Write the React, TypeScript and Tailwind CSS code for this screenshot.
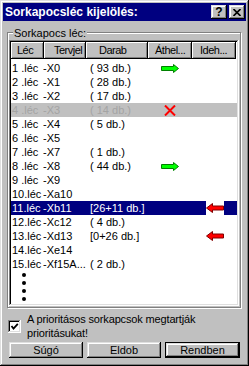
import React from "react";

type Row = {
  n: string;
  t: string;
  d: string;
  a?: "green" | "x";
  i?: "red";
  selected?: boolean;
  disabled?: boolean;
};

const rows: Row[] = [
  { n: "1 .léc", t: "-X0", d: "( 93 db.)", a: "green" },
  { n: "2 .léc", t: "-X1", d: "( 28 db.)" },
  { n: "3 .léc", t: "-X2", d: "( 17 db.)" },
  { n: "4 .léc", t: "-X3", d: "( 14 db.)", a: "x", disabled: true },
  { n: "5 .léc", t: "-X4", d: "( 5 db.)" },
  { n: "6 .léc", t: "-X5", d: "" },
  { n: "7 .léc", t: "-X7", d: "( 1 db.)" },
  { n: "8 .léc", t: "-X8", d: "( 44 db.)", a: "green" },
  { n: "9 .léc", t: "-X9", d: "" },
  { n: "10.léc", t: "-Xa10", d: "" },
  { n: "11.léc", t: "-Xb11", d: "[26+11 db.]", i: "red", selected: true },
  { n: "12.léc", t: "-Xc12", d: "( 4 db.)" },
  { n: "13.léc", t: "-Xd13", d: "[0+26 db.]", i: "red" },
  { n: "14.léc", t: "-Xe14", d: "" },
  { n: "15.léc", t: "-Xf15A...", d: "( 2 db.)" },
];

const raised =
  "bg-[#c0c0c0] shadow-[inset_-1px_-1px_#000,inset_1px_1px_#dfdfdf,inset_-2px_-2px_#808080,inset_2px_2px_#fff]";
const headerCell =
  "h-full flex items-center whitespace-nowrap tracking-[-0.5px] bg-[#c0c0c0] shadow-[inset_-1px_-1px_#000,inset_1px_1px_#fff,inset_-2px_-2px_#808080]";

function GreenArrow() {
  return (
    <svg width="18" height="9" viewBox="0 0 18 9">
      <polygon
        points="0.5,2.5 12.5,2.5 12.5,0.5 17.5,4.5 12.5,8.5 12.5,6.5 0.5,6.5"
        fill="#00ff00"
        stroke="#008000"
        strokeWidth="1"
      />
    </svg>
  );
}

function RedArrow() {
  return (
    <svg width="18" height="10" viewBox="0 0 18 10">
      <polygon
        points="17.5,3 6.5,3 6.5,0.5 0.5,5 6.5,9.5 6.5,7 17.5,7"
        fill="#ff0000"
        stroke="#800000"
        strokeWidth="1"
      />
    </svg>
  );
}

function RedX() {
  return (
    <svg width="12" height="11" viewBox="0 0 12 11">
      <path d="M1 0.5 L11 10.5 M11 0.5 L1 10.5" stroke="#ff0000" strokeWidth="2" />
    </svg>
  );
}

export default function App() {
  return (
    <div
      className={`w-[249px] h-[366px] p-[3px] flex flex-col font-['Liberation_Sans',Arial,sans-serif] text-[11px] text-black leading-none ${raised}`}
    >
      {/* title bar */}
      <div className="h-[18px] shrink-0 bg-[#000080] flex items-center pl-[2px] pr-[1px]">
        <span className="text-white font-bold text-[12px]">Sorkapocsléc kijelölés:</span>
        <div className="ml-auto flex gap-[2px]">
          <div className={`w-[16px] h-[14px] flex items-center justify-center font-bold text-[12px] ${raised}`}>
            ?
          </div>
          <div className={`w-[16px] h-[14px] flex items-center justify-center ${raised}`}>
            <svg width="8" height="7" viewBox="0 0 8 7">
              <path d="M0.5 0 L7.5 7 M7.5 0 L0.5 7" stroke="#000" strokeWidth="1.6" />
            </svg>
          </div>
        </div>
      </div>

      {/* group box */}
      <div className="relative mt-[11px] ml-[4px] mr-[5px] h-[276px] shrink-0 border border-[#808080] shadow-[inset_1px_1px_#fff,1px_1px_#fff] pt-[7px] px-[1px] pb-[1px]">
        <span className="absolute left-[5px] top-[-6px] bg-[#c0c0c0] px-[1px] leading-[12px]">
          Sorkapocs léc:
        </span>
        <div className="h-full bg-white p-[2px] flex flex-col shadow-[inset_-1px_-1px_#fff,inset_1px_1px_#808080,inset_-2px_-2px_#dfdfdf,inset_2px_2px_#000]">
          {/* header */}
          <div className="h-[17px] flex shrink-0">
            <div className={`w-[33px] pl-[6px] ${headerCell}`}>Léc</div>
            <div className={`w-[42px] pl-[10px] ${headerCell}`}>Tervjel</div>
            <div className={`w-[62px] pl-[13px] ${headerCell}`}>Darab</div>
            <div className={`w-[44px] pl-[7px] ${headerCell}`}>Áthel...</div>
            <div className={`w-[44px] pl-[8px] ${headerCell}`}>Ideh...</div>
          </div>

          {/* rows */}
          <div className="pt-[2px] flex flex-col">
            {rows.map((r) => (
              <div
                key={r.n}
                className={`h-[14px] flex items-center whitespace-pre ${
                  r.selected
                    ? "bg-[#000080] text-white"
                    : r.disabled
                    ? "bg-[#c0c0c0] text-[#a4a4a4]"
                    : ""
                }`}
              >
                <span className="w-[32px] pl-[1px]">{r.n}</span>
                <span className="w-[47px] overflow-hidden">{r.t}</span>
                <span className="w-[58px]">{r.d}</span>
                <span className="w-[44px] h-full flex items-center justify-center">
                  {r.a === "green" && <GreenArrow />}
                  {r.a === "x" && <RedX />}
                </span>
                <span className="w-[45px] h-full flex items-center justify-center">
                  {r.i === "red" && (
                    <span className={`w-[18px] h-full flex items-center justify-center ${r.selected ? "bg-white" : ""}`}>
                      <RedArrow />
                    </span>
                  )}
                </span>
              </div>
            ))}
          </div>

          {/* more */}
          <div className="pt-[2px] pl-[11px] flex flex-col gap-[4px]">
            <div className="w-[4px] h-[4px] rounded-full bg-black" />
            <div className="w-[4px] h-[4px] rounded-full bg-black" />
            <div className="w-[4px] h-[4px] rounded-full bg-black" />
            <div className="w-[4px] h-[4px] rounded-full bg-black" />
          </div>
        </div>
      </div>

      {/* checkbox */}
      <div className="mt-[4px] ml-[5px] flex items-center gap-[6px] shrink-0">
        <div className="w-[13px] h-[13px] bg-white flex items-center justify-center shadow-[inset_-1px_-1px_#fff,inset_1px_1px_#808080,inset_-2px_-2px_#dfdfdf,inset_2px_2px_#000]">
          <svg width="9" height="9" viewBox="0 0 9 9">
            <path d="M1.5 4 L3.5 6.5 L7.8 1.8" stroke="#000" strokeWidth="1.8" fill="none" />
          </svg>
        </div>
        <div className="leading-[14px] tracking-[-0.15px]">
          A prioritásos sorkapcsok megtartják
          <br />
          prioritásukat!
        </div>
      </div>

      {/* buttons */}
      <div className="mt-[2px] ml-[6px] flex gap-[4px] shrink-0">
        <div className={`w-[74px] h-[16px] flex items-center justify-center ${raised}`}>Súgó</div>
        <div className={`w-[74px] h-[16px] flex items-center justify-center ${raised}`}>Eldob</div>
        <div className="w-[75px] h-[16px] border border-black">
          <div className={`w-full h-full flex items-center justify-center ${raised}`}>Rendben</div>
        </div>
      </div>
    </div>
  );
}
